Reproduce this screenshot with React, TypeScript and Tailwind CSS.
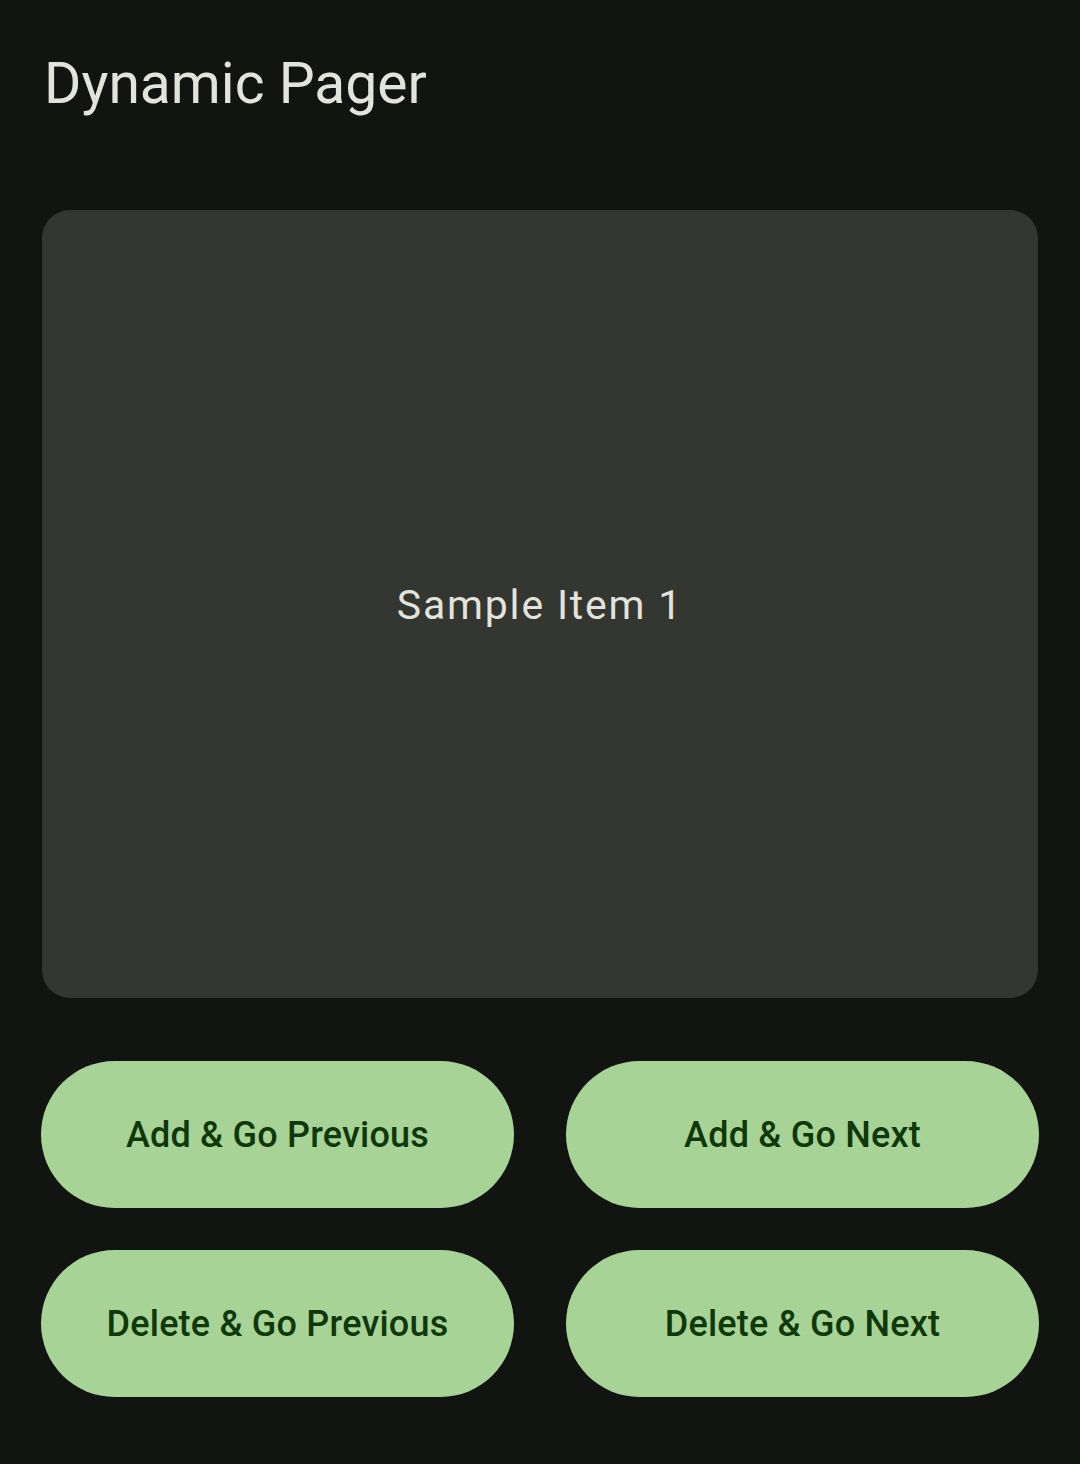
export default function App() {
  const font = { fontFamily: "Roboto, 'Noto Sans', sans-serif" };
  const btn =
    "flex h-[147px] items-center justify-center rounded-full bg-[#a8d396] text-[36px] font-medium text-[#0f380b] tracking-[0.2px]";
  return (
    <div className="min-h-[1464px] w-[1080px] bg-[#121411]" style={font}>
      <div className="px-[44px] pt-[48px]">
        <h1 className="text-[57px] leading-[72px] font-normal text-[#e2e3dc]">Dynamic Pager</h1>
      </div>
      <div className="mx-[42px] mt-[90px] flex h-[788px] items-center justify-center rounded-[28px] bg-[#343631]">
        <span className="pt-[4px] text-[41px] tracking-[1.8px] text-[#e2e3dc]">Sample Item 1</span>
      </div>
      <div className="mx-[41px] mt-[63px] grid grid-cols-2 gap-x-[52px] gap-y-[42px]">
        <button className={btn}>Add &amp; Go Previous</button>
        <button className={btn}>Add &amp; Go Next</button>
        <button className={btn}>Delete &amp; Go Previous</button>
        <button className={btn}>Delete &amp; Go Next</button>
      </div>
    </div>
  );
}
